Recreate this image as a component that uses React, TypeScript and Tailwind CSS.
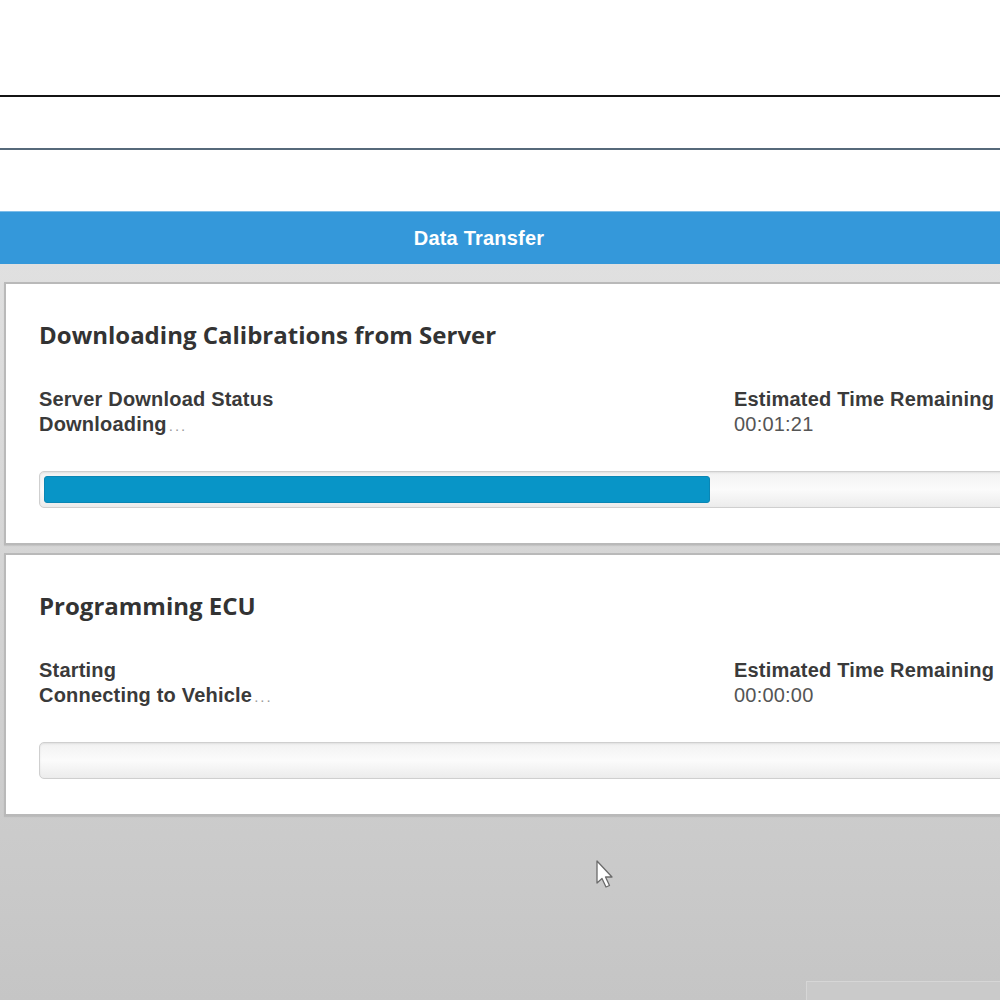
import React from 'react';

interface TransferPanelProps {
    title: string;
    label: string;
    status: string;
    remaining: string;
    progress: number;
}

const TransferPanel: React.FC<TransferPanelProps> = ({ title, label, status, remaining, progress }) => {
    return (
        <div className="w-[1030px] h-[263px] border-2 border-[#b9b9b9] bg-white pl-[33px] pt-[34px] shadow-[0_1px_1px_rgba(0,0,0,0.08)]">
            <h2 className="text-[24px] leading-[34px] font-bold text-[#333333] font-['Open_Sans',sans-serif]">
                {title}
            </h2>

            <div className="mt-[35px] grid grid-cols-[695px_1fr] text-[20px] leading-[25px] font-['Liberation_Sans',Arial,sans-serif] tracking-[0.2px]">
                <div>
                    <div className="font-bold text-[#3a3a3a]">{label}</div>
                    <div className="font-bold text-[#3a3a3a]">
                        {status}
                        <span className="font-normal text-[#9a9a9a] text-[15px] tracking-[2px] ml-[2px]">...</span>
                    </div>
                </div>
                <div>
                    <div className="font-bold text-[#3a3a3a]">Estimated Time Remaining</div>
                    <div className="text-[#555555]">{remaining}</div>
                </div>
            </div>

            {/* Progress track */}
            <div className="mt-[33px] h-[37px] w-[1000px] rounded-[5px] border border-[#cfcfcf] bg-gradient-to-b from-[#f2f2f2] via-[#fbfbfb] to-[#ececec] p-[4px] shadow-[inset_0_1px_2px_rgba(0,0,0,0.08)]">
                {progress > 0 && (
                    <div
                        className="h-full rounded-[3px] bg-[#0895c7] border border-[#0a86b4]"
                        style={{ width: `${progress}%` }}
                    />
                )}
            </div>
        </div>
    );
};

export default function App() {
    return (
        <div className="w-[1000px] h-[1000px] overflow-hidden bg-white flex flex-col font-['Liberation_Sans',Arial,sans-serif]">
            <div className="h-[95px] shrink-0" />
            <div className="h-[2px] shrink-0 bg-[#141414]" />
            <div className="h-[51px] shrink-0" />
            <div className="h-[2px] shrink-0 bg-[#56697a]" />
            <div className="h-[61px] shrink-0" />

            {/* Header bar */}
            <div className="h-[53px] shrink-0 bg-[#3498da] border-t border-[#7dbde9] flex items-center justify-center pr-[42px]">
                <span className="text-white font-bold text-[20px] tracking-[0.2px]">Data Transfer</span>
            </div>

            {/* Content area */}
            <div className="relative flex-1 bg-gradient-to-b from-[#e0e0e0] to-[#c5c5c5] pl-[4px] pt-[18px] flex flex-col gap-[8px]">
                <TransferPanel
                    title="Downloading Calibrations from Server"
                    label="Server Download Status"
                    status="Downloading"
                    remaining="00:01:21"
                    progress={67.3}
                />
                <TransferPanel
                    title="Programming ECU"
                    label="Starting"
                    status="Connecting to Vehicle"
                    remaining="00:00:00"
                    progress={0}
                />

                {/* Mouse cursor */}
                <svg
                    className="absolute left-[596px] top-[596px]"
                    width="22"
                    height="32"
                    viewBox="0 0 22 32"
                >
                    <path
                        d="M1 1 L1 23 L6 18.5 L10 27 L13.5 25.5 L9.5 17 L16 17 Z"
                        fill="#ffffff"
                        stroke="#6b6b6b"
                        strokeWidth="1.3"
                        strokeLinejoin="round"
                    />
                </svg>

                {/* Faint window edge bottom right */}
                <div className="absolute left-[806px] top-[717px] w-[200px] h-[40px] border-t border-l border-[#d6d6d6] bg-[#cacaca]" />
            </div>
        </div>
    );
}
